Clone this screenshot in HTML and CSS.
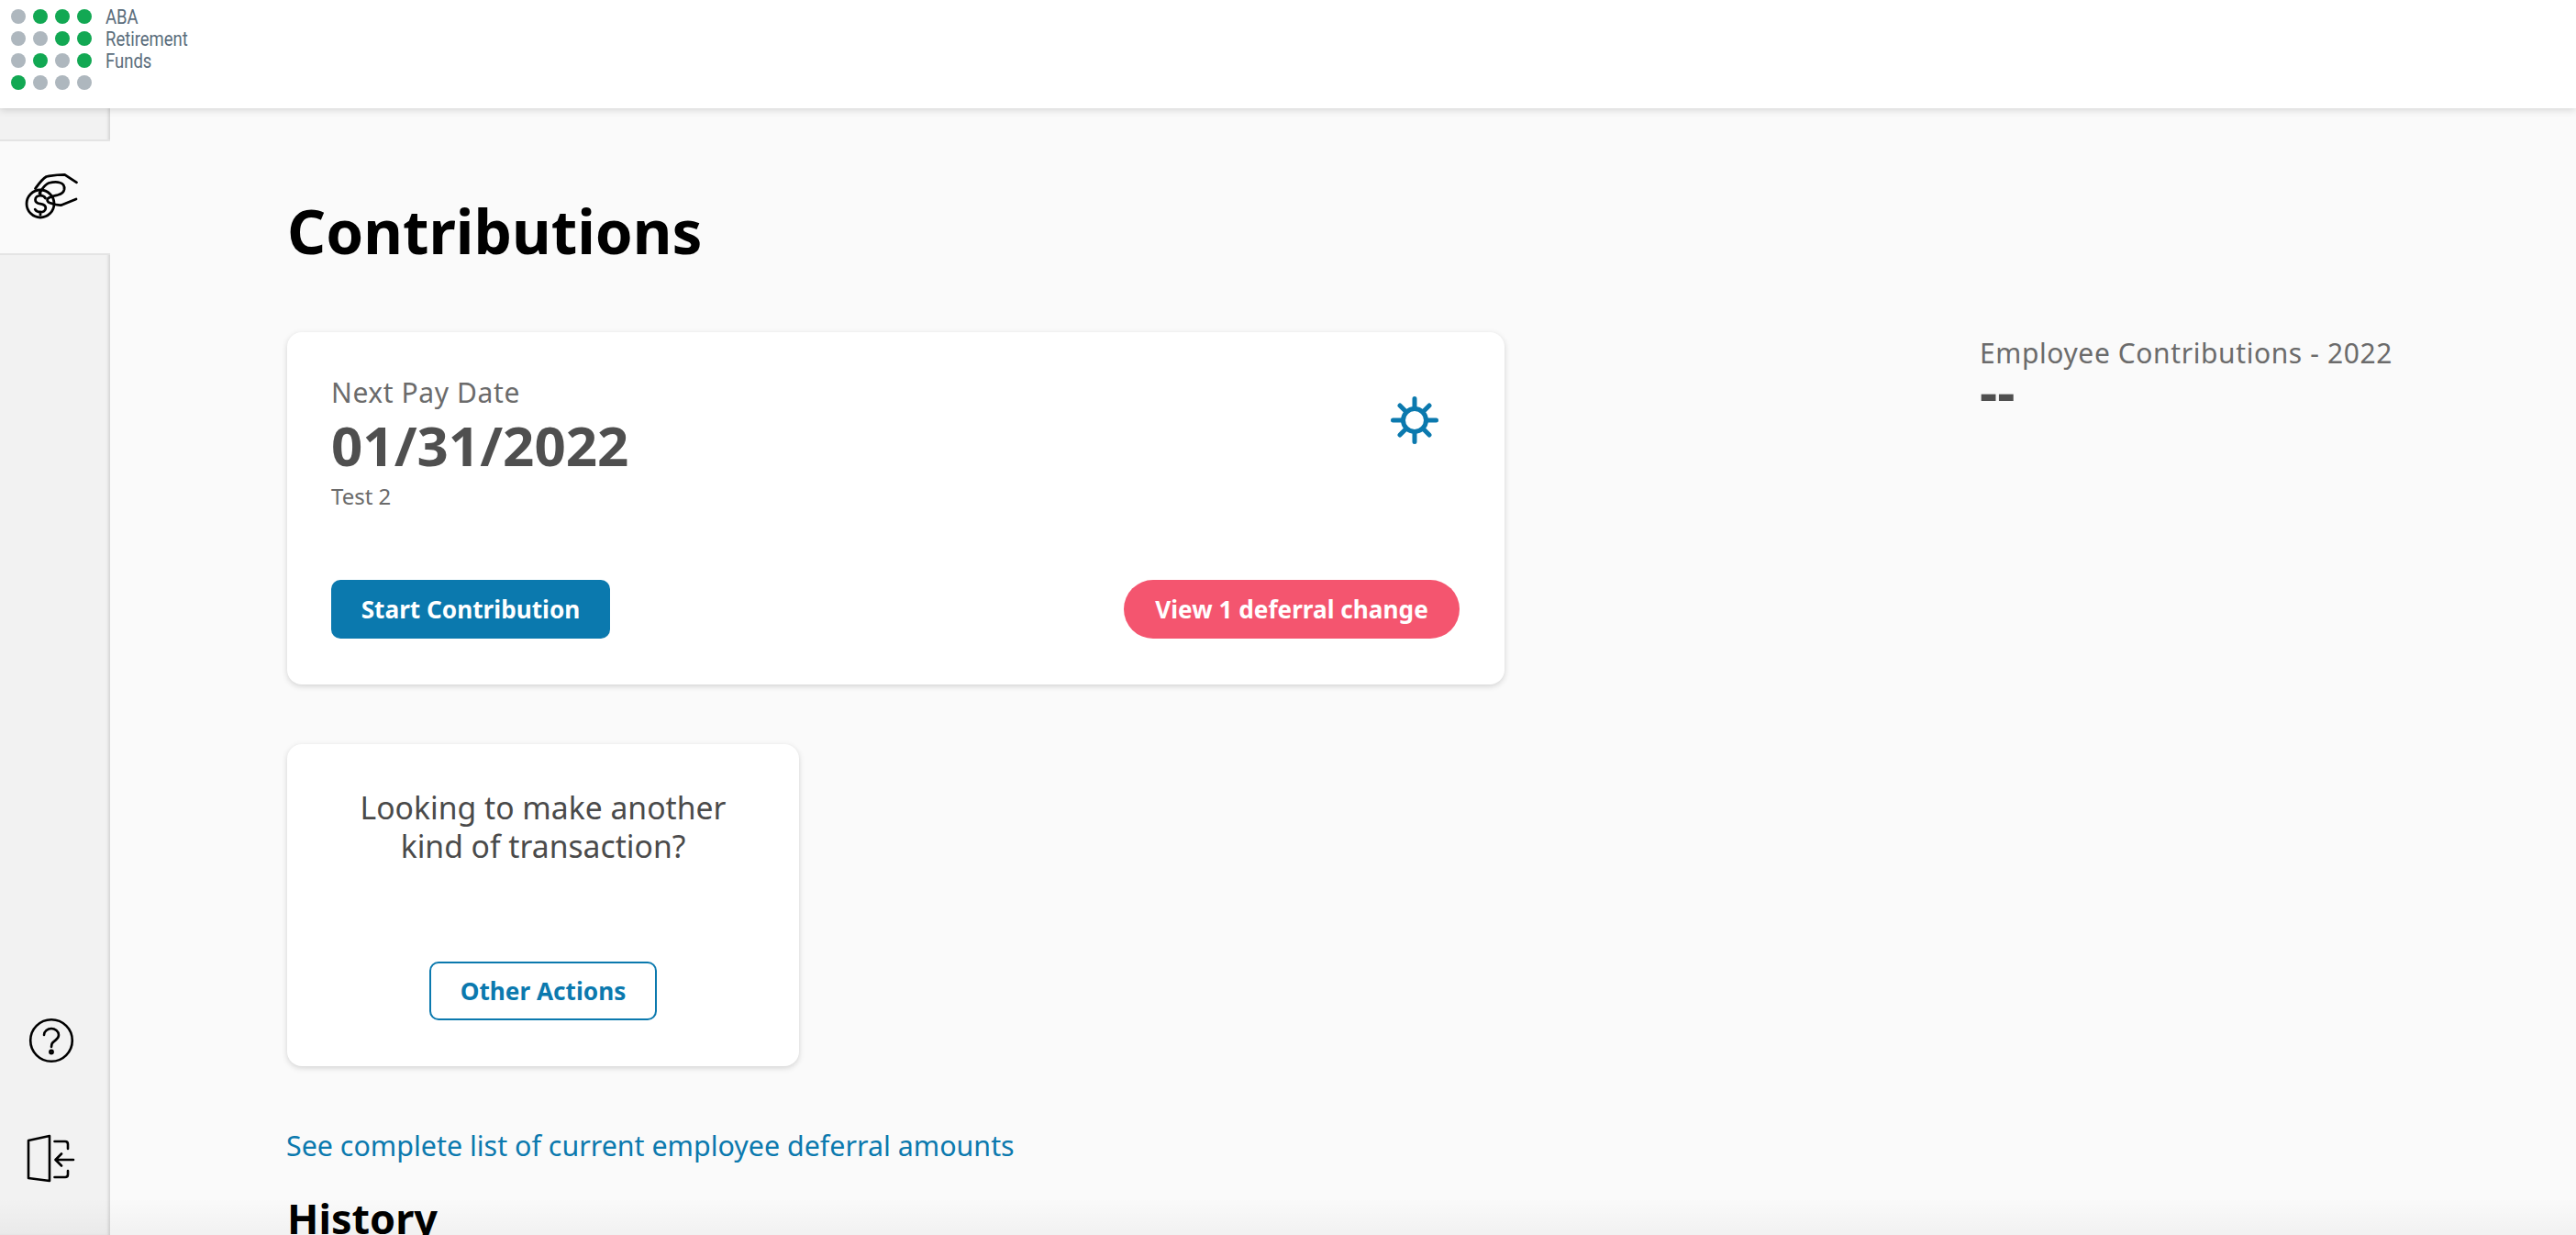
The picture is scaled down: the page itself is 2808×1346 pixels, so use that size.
FILE: index.html
```html
<!DOCTYPE html>
<html lang="en">
<head>
<meta charset="utf-8">
<title>Contributions</title>
<link rel="stylesheet" href="styles.css">
</head>
<body>
<div class="app">
  <header class="topbar">
    <div class="logo">
      <svg class="logo-dots" width="96" height="96" viewBox="0 0 96 96" aria-hidden="true">
        <g fill="#aeb7be">
          <circle cx="8" cy="8" r="8"/><circle cx="8" cy="32" r="8"/><circle cx="32" cy="32" r="8"/>
          <circle cx="8" cy="56" r="8"/><circle cx="56" cy="56" r="8"/>
          <circle cx="32" cy="80" r="8"/><circle cx="56" cy="80" r="8"/><circle cx="80" cy="80" r="8"/>
        </g>
        <g fill="#12a853">
          <circle cx="32" cy="8" r="8"/><circle cx="56" cy="8" r="8"/><circle cx="80" cy="8" r="8"/>
          <circle cx="56" cy="32" r="8"/><circle cx="80" cy="32" r="8"/>
          <circle cx="32" cy="56" r="8"/><circle cx="80" cy="56" r="8"/>
          <circle cx="8" cy="80" r="8"/>
        </g>
      </svg>
      <div class="logo-text">ABA<br>Retirement<br>Funds</div>
    </div>
  </header>
  <div class="body-row">
    <nav class="sidebar">
      <div class="side-spacer"></div>
      <a class="side-item">
        <svg width="60" height="56" viewBox="26 188 60 56" fill="none" stroke="#000" stroke-width="2.8" stroke-linecap="round" stroke-linejoin="round" aria-hidden="true">
          <circle cx="44" cy="223" r="15"/>
          <path d="M38.500 206.500c3-4 7-10 12-13l3-.7c6-1 11-1.500 17-1.500l13 8.500"/>
          <path d="M43 211.500c3-5 6-9.500 10-11 4-1 9-1.500 12-.5 4 1 5.500 4 5 7.500-.5 3-3 5-7 6-4 1-9 2-11 4-1 2 0 3.500 2 4.500 3 1 9 3 13 2.500l16-6.500"/>
          <path d="M49.500 217c-1-2-3-2.800-5.500-2.800-3 0-5.500 1.800-5.500 4.500 0 3 2.500 4 5.500 4.500 3 .5 5.800 1.500 5.800 4.500 0 2.800-2.800 4.500-5.800 4.500-2.500 0-4.700-1-5.800-3M44 211v3M44 232v3"/>
        </svg>
      </a>
      <div class="side-fill"></div>
      <a class="side-tool side-help">
        <svg width="50" height="50" viewBox="0 0 50 50" fill="none" stroke="#000" stroke-width="2.6" stroke-linecap="round" aria-hidden="true">
          <circle cx="25" cy="25" r="22.800"/>
          <path d="M17 19c0-4 4-7 8-7s8 3 8 7-3 5-5 7c-2 1-3 3-3 6"/>
          <circle cx="25" cy="37.500" r="1.600"/>
        </svg>
      </a>
      <a class="side-tool side-exit">
        <svg width="54" height="54" viewBox="30 1235 54 54" fill="none" stroke="#000" stroke-width="2.6" stroke-linecap="round" stroke-linejoin="round" aria-hidden="true">
          <path d="M32 1243l23-5v49l-23-3z"/>
          <path d="M60.500 1244h11.500q3 0 3 3v5M60.500 1283h11.500q3 0 3-3v-4"/>
          <path d="M81 1264h-19M68 1257.500l-6.500 6.500 6.500 6.500"/>
        </svg>
      </a>
    </nav>
    <main class="main">
      <div class="main-left">
        <h1 class="page-title">Contributions</h1>
        <section class="card pay-card">
          <div class="pay-top">
            <div class="pay-info">
              <div class="pay-label">Next Pay Date</div>
              <div class="pay-date">01/31/2022</div>
              <div class="pay-note">Test 2</div>
            </div>
            <svg class="gear" width="52" height="52" viewBox="0 0 52 52" fill="none" stroke="#0b79ae" stroke-width="5" stroke-linecap="round" aria-hidden="true">
              <circle cx="26" cy="26" r="12.500"/>
              <path d="M26 2.500v11M26 38.500v11M2.500 26h11M38.500 26h11M10 10l7 7M35 35l7 7M42 10l-7 7M17 35l-7 7"/>
            </svg>
          </div>
          <div class="pay-actions">
            <a class="btn btn-primary">Start Contribution</a>
            <a class="btn btn-pink">View 1 deferral change</a>
          </div>
        </section>
        <section class="card other-card">
          <p class="other-text">Looking to make another<br>kind of transaction?</p>
          <a class="btn btn-outline">Other Actions</a>
        </section>
        <a class="deferral-link">See complete list of current employee deferral amounts</a>
        <h2 class="history-title">History</h2>
      </div>
      <aside class="main-right">
        <div class="ytd-label">Employee Contributions - 2022</div>
        <div class="ytd-value">--</div>
      </aside>
    </main>
  </div>
  <div class="bottom-fade"></div>
</div>
</body>
</html>
```

FILE: styles.css
```css
* { box-sizing: border-box; }
html, body { margin: 0; height: 100%; }
body {
  overflow: hidden;
  background: #fafafa;
  font-family: "Noto Sans", "Open Sans", sans-serif;
  color: #4a4a4a;
}
.app { height: 1346px; display: flex; flex-direction: column; position: relative; overflow: hidden; }
.topbar {
  height: 118px;
  flex: none;
  background: #fff;
  box-shadow: 0 2px 8px rgba(0,0,0,.15);
  position: relative;
  z-index: 2;
  padding: 10px 12px;
}
.logo { display: flex; gap: 7px; align-items: flex-start; }
.logo-text {
  font-family: "Roboto", sans-serif;
  font-size: 22px;
  line-height: 24px;
  color: #5b6d7c;
  margin-top: -3px;
  transform: scaleX(.84);
  transform-origin: left top;
}
.body-row { flex: 1; display: flex; min-height: 0; }
.sidebar {
  width: 120px;
  flex: none;
  background: #f2f2f2;
  box-shadow: inset -3px 0 3px -1px rgba(0,0,0,.12);
  display: flex;
  flex-direction: column;
  align-items: stretch;
}
.side-spacer { height: 34px; flex: none; }
.side-item {
  height: 126px;
  flex: none;
  padding-right: 8px;
  background: #fafafa;
  border-top: 2px solid #e4e4e4;
  border-bottom: 2px solid #e4e4e4;
  display: flex;
  align-items: center;
  justify-content: center;
}
.side-fill { flex: 1; }
.side-tool { display: flex; justify-content: center; padding-right: 8px; }
.side-help { margin-bottom: 76px; }
.side-exit { margin-bottom: 57px; }
.main {
  flex: 1;
  display: flex;
  padding: 0 0 0 193px;
  min-width: 0;
}
.main-left { width: 1327px; flex: none; }
.page-title {
  margin: 0;
  padding-top: 86px;
  font-size: 65.7px;
  line-height: 96px;
  font-weight: 700;
  color: #000;
}
.card {
  background: #fff;
  border-radius: 16px;
  box-shadow: 0 2px 6px rgba(0,0,0,.16);
}
.pay-card {
  margin-top: 62px;
  height: 384px;
  padding: 46px 49px 0 48px;
}
.pay-top { display: flex; justify-content: space-between; align-items: flex-start; height: 224px; }
.pay-label { font-size: 30px; line-height: 40px; letter-spacing: .6px; color: #6b6b6b; }
.pay-date { font-size: 60px; line-height: 72px; margin-top: 1px; font-weight: 700; color: #4f4f4f; }
.pay-note { font-size: 24px; line-height: 36px; color: #6b6b6b; margin-top: 2px; }
.gear { margin: 24px 23px 0 0; }
.pay-actions { display: flex; justify-content: space-between; }
.btn {
  display: inline-flex;
  align-items: center;
  justify-content: center;
  height: 64px;
  font-size: 26.2px;
  font-weight: 700;
}
.btn-primary { width: 304px; background: #0b79ae; color: #fff; border-radius: 10px; }
.btn-pink { width: 366px; background: #f4556f; color: #fff; border-radius: 32px; }
.other-card {
  margin-top: 65px;
  width: 558px;
  height: 351px;
  padding: 48px 0 0;
  display: flex;
  flex-direction: column;
  align-items: center;
}
.other-text { margin: 0; height: 189px; font-size: 33.7px; line-height: 42px; text-align: center; color: #4a4a4a; }
.btn-outline { width: 248px; border: 2px solid #0b79ae; color: #0b79ae; background: #fff; border-radius: 10px; }
.deferral-link { display: block; margin: 65px 0 0 -1px; font-size: 30.4px; line-height: 44px; color: #0b79ae; }
.history-title { margin: 27px 0 0; font-size: 45px; line-height: 60px; font-weight: 700; color: #000; }
.main-right { margin-left: 518px; padding-top: 249px; }
.ytd-label { font-size: 30px; line-height: 36px; letter-spacing: .6px; color: #6b6b6b; }
.ytd-value { font-size: 60px; line-height: 46px; height: 46px; font-weight: 700; color: #4f4f4f; }
.bottom-fade {
  position: absolute;
  left: 0;
  right: 0;
  bottom: 0;
  height: 40px;
  background: linear-gradient(rgba(0,0,0,0), rgba(0,0,0,.035));
  pointer-events: none;
}
```
